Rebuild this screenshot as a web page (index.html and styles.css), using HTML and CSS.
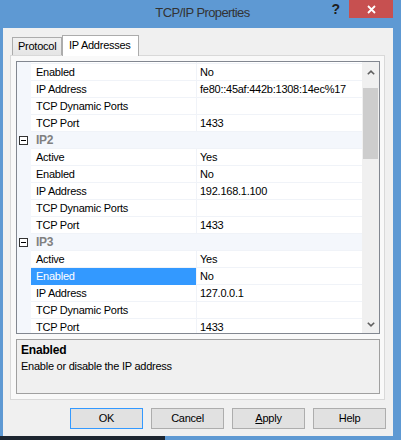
FILE: index.html
```html
<!DOCTYPE html>
<html>
<head>
<meta charset="utf-8">
<title>TCP/IP Properties</title>
<link rel="stylesheet" href="styles.css">
</head>
<body>
<div class="window">
  <div class="titlebar">
    <div class="tb-side"></div>
    <div class="title">TCP/IP Properties</div>
    <div class="tb-side tb-controls">
      <span class="help">?</span>
      <span class="close"><svg width="9" height="9" viewBox="0 0 9 9"><path d="M1 1 L8 8 M8 1 L1 8" stroke="#fff" stroke-width="1.8" fill="none"/></svg></span>
    </div>
  </div>
  <div class="client">
    <div class="tabs">
      <div class="tab">Protocol</div>
      <div class="tab active">IP Addresses</div>
    </div>
    <div class="page">
      <div class="grid">
        <div class="rows">
          <div class="list">
            <div class="row partial"><div class="g"></div><div class="n"></div><div class="v"></div></div>
            <div class="row"><div class="g"></div><div class="n">Enabled</div><div class="v">No</div></div>
            <div class="row"><div class="g"></div><div class="n">IP Address</div><div class="v">fe80::45af:442b:1308:14ec%17</div></div>
            <div class="row"><div class="g"></div><div class="n">TCP Dynamic Ports</div><div class="v"></div></div>
            <div class="row"><div class="g"></div><div class="n">TCP Port</div><div class="v">1433</div></div>
            <div class="row cat"><div class="g"><span class="minus"></span></div><div class="c">IP2</div></div>
            <div class="row"><div class="g"></div><div class="n">Active</div><div class="v">Yes</div></div>
            <div class="row"><div class="g"></div><div class="n">Enabled</div><div class="v">No</div></div>
            <div class="row"><div class="g"></div><div class="n">IP Address</div><div class="v">192.168.1.100</div></div>
            <div class="row"><div class="g"></div><div class="n">TCP Dynamic Ports</div><div class="v"></div></div>
            <div class="row"><div class="g"></div><div class="n">TCP Port</div><div class="v">1433</div></div>
            <div class="row cat"><div class="g"><span class="minus"></span></div><div class="c">IP3</div></div>
            <div class="row"><div class="g"></div><div class="n">Active</div><div class="v">Yes</div></div>
            <div class="row sel"><div class="g"></div><div class="n">Enabled</div><div class="v">No<span class="dd-line"></span></div></div>
            <div class="row"><div class="g"></div><div class="n">IP Address</div><div class="v">127.0.0.1</div></div>
            <div class="row"><div class="g"></div><div class="n">TCP Dynamic Ports</div><div class="v"></div></div>
            <div class="row"><div class="g"></div><div class="n">TCP Port</div><div class="v">1433</div></div>
          </div>
        </div>
        <div class="vscroll">
          <div class="sb-btn sb-up"><svg width="8" height="5" viewBox="0 0 8 5"><polyline points="0.8,4.3 4,1.2 7.2,4.3" fill="none" stroke="#606060" stroke-width="1.6"/></svg></div>
          <div class="sb-track"><div class="sb-thumb"></div></div>
          <div class="sb-btn sb-down"><svg width="8" height="5" viewBox="0 0 8 5"><polyline points="0.8,0.7 4,3.8 7.2,0.7" fill="none" stroke="#606060" stroke-width="1.6"/></svg></div>
        </div>
      </div>
      <div class="desc">
        <div class="desc-title">Enabled</div>
        <div class="desc-text">Enable or disable the IP address</div>
      </div>
    </div>
    <div class="buttons">
      <div class="btn default">OK</div>
      <div class="btn">Cancel</div>
      <div class="btn"><u>A</u>pply</div>
      <div class="btn">Help</div>
    </div>
  </div>
  <div class="taskbar"><div class="task-dark"></div></div>
</div>
</body>
</html>
```

FILE: styles.css
```css
html, body {
  margin: 0;
  padding: 0;
}
body {
  width: 401px;
  height: 440px;
  overflow: hidden;
  background: #5e99d3;
  font-family: "Liberation Sans", Arial, sans-serif;
  font-size: 11px;
  letter-spacing: -0.25px;
  color: #000;
}
.window {
  display: flex;
  flex-direction: column;
  width: 401px;
  height: 440px;
}
.titlebar {
  height: 28px;
  display: grid;
  grid-template-columns: 1fr auto 1fr;
}
.title {
  font-size: 13px;
  letter-spacing: -0.6px;
  line-height: 25px;
  color: #333;
  padding-left: 4px;
}
.tb-controls {
  display: flex;
  justify-content: flex-end;
  align-items: flex-start;
  padding-right: 8px;
}
.help {
  font-weight: bold;
  font-size: 14px;
  line-height: 18px;
  color: #1e1e1e;
  margin-right: 9px;
  letter-spacing: 0;
}
.close {
  width: 44px;
  height: 18px;
  background: #c75050;
  display: flex;
  align-items: center;
  justify-content: center;
}
.client {
  height: 408px;
  margin: 0 8px 0 3px;
  background: #f0f0f0;
  padding: 7px 8px 7px 7px;
  box-sizing: border-box;
  display: flex;
  flex-direction: column;
}
.tabs {
  height: 20px;
  display: flex;
  align-items: flex-end;
  padding-left: 2px;
}
.tab {
  box-sizing: border-box;
  width: 50px;
  height: 18px;
  border: 1px solid #acacac;
  border-bottom: none;
  background: linear-gradient(#f0f0f0, #e5e5e5);
  padding-left: 5px;
  line-height: 17px;
}
.tab.active {
  width: 77px;
  height: 21px;
  margin-bottom: -1px;
  background: #fff;
  position: relative;
  z-index: 1;
  padding-left: 6px;
  line-height: 18px;
}
.page {
  box-sizing: border-box;
  height: 345px;
  border: 1px solid #d9d9d9;
  background: #f9f9f9;
  padding: 5px 4px 5px 5px;
  display: flex;
  flex-direction: column;
}
.grid {
  box-sizing: border-box;
  height: 273px;
  border: 1px solid #828790;
  background: #fff;
  display: flex;
}
.rows {
  flex: 1;
  overflow: hidden;
}
.row {
  display: flex;
  height: 17px;
  line-height: 16px;
}
.row.partial {
  height: 2px;
}
.g {
  width: 14px;
  flex: none;
  background: #f4f7fc;
  display: flex;
  align-items: center;
}
.n {
  width: 165px;
  flex: none;
  box-sizing: border-box;
  padding-left: 5px;
  border-bottom: 1px solid #f0f3f8;
  white-space: nowrap;
  overflow: hidden;
}
.v {
  flex: 1;
  box-sizing: border-box;
  padding-left: 3px;
  border-left: 1px solid #f0f3f8;
  border-bottom: 1px solid #f0f3f8;
  white-space: nowrap;
  overflow: hidden;
  position: relative;
}
.cat .c {
  flex: 1;
  background: #f4f7fc;
  border-bottom: 1px solid #f0f3f8;
  padding-left: 5px;
  font-weight: bold;
  font-size: 12px;
  letter-spacing: -0.3px;
  color: #808080;
  box-sizing: border-box;
}
.minus {
  box-sizing: border-box;
  width: 9px;
  height: 9px;
  margin-left: 2px;
  border: 1px solid #333;
  background: #fff;
  display: flex;
  align-items: center;
  justify-content: center;
}
.minus::before {
  content: "";
  width: 5px;
  height: 1px;
  background: #000;
}
.sel .n {
  background: #3399ff;
  color: #fff;
  border-bottom-color: #3399ff;
}
.dd-line {
  position: absolute;
  right: 0;
  bottom: -1px;
  width: 17px;
  height: 1px;
  background: #646464;
}
.vscroll {
  width: 17px;
  flex: none;
  background: #f0f0f0;
  display: flex;
  flex-direction: column;
}
.sb-btn {
  display: flex;
  align-items: center;
  justify-content: center;
}
.sb-up {
  height: 20px;
}
.sb-down {
  height: 17px;
}
.sb-track {
  flex: 1;
}
.sb-thumb {
  margin: 6px 1px 0 1px;
  height: 71px;
  background: #cdcdcd;
}
.desc {
  box-sizing: border-box;
  height: 55px;
  margin-top: 5px;
  border: 1px solid #a0a0a0;
  background: #f0f0f0;
  padding: 2px 4px;
  line-height: 16px;
}
.desc-title {
  font-weight: bold;
  font-size: 12px;
  letter-spacing: -0.2px;
}
.buttons {
  margin-top: 8px;
  margin-right: -1px;
  display: flex;
  justify-content: flex-end;
  gap: 8px;
}
.btn {
  box-sizing: border-box;
  width: 73px;
  height: 21px;
  border: 1px solid #adadad;
  background: #e1e1e1;
  text-align: center;
  line-height: 19px;
}
.btn.default {
  border-color: #3399ff;
}
.btn u {
  text-decoration: underline;
}
.taskbar {
  height: 4px;
  display: flex;
}
.task-dark {
  width: 165px;
  background: #1d2630;
}
```
